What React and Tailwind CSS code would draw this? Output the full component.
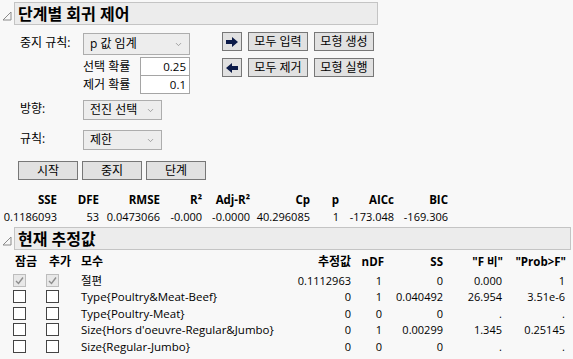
import { ChevronDown } from 'lucide-react'

const font = "font-['Segoe_UI','Open_Sans','Noto_Sans_CJK_KR',sans-serif]"

function Disclosure() {
  return (
    <svg width="10" height="10" viewBox="0 0 10 10" className="mx-[2px] mt-[4px] shrink-0">
      <polygon points="1,9 9,1 9,9" fill="none" stroke="#8a8a8a" strokeWidth="1" />
    </svg>
  )
}

function SectionHeader({ title, width }) {
  return (
    <div className="flex items-center">
      <Disclosure />
      <div className={`${width} h-[23px] border border-[#c4c4c4] bg-[#ececec] flex items-center pl-[3px]`}>
        <span className="text-[16px] font-bold leading-none text-black">{title}</span>
      </div>
    </div>
  )
}

function Dropdown({ value, width, height }) {
  return (
    <div className={`${width} ${height} border border-[#adadad] bg-[#ededed] flex items-center justify-between pl-[6px] pr-[6px]`}>
      <span className="leading-none text-[12px]">{value}</span>
      <ChevronDown className="w-[9px] h-[9px] text-[#8a8a8a]" strokeWidth={2} />
    </div>
  )
}

function Btn({ children, width = 'w-[60px]' }) {
  return (
    <div className={`${width} h-[19px] border border-[#777] bg-[#e1e1e1] flex items-center justify-center leading-none text-[12px]`}>
      {children}
    </div>
  )
}

function ArrowBtn({ dir }) {
  return (
    <div className="w-[20px] h-[19px] border border-[#777] bg-[#e1e1e1] flex items-center justify-center">
      <svg width="14" height="10" viewBox="0 0 14 10">
        {dir === 'right' ? (
          <polygon points="1,3 7,3 7,0 13,5 7,10 7,7 1,7" fill="#0b1a48" />
        ) : (
          <polygon points="13,3 7,3 7,0 1,5 7,10 7,7 13,7" fill="#0b1a48" />
        )}
      </svg>
    </div>
  )
}

function NumBox({ value }) {
  return (
    <div className="w-[50px] h-[19px] border border-[#a5a5a5] bg-white flex items-center justify-end pr-[3px] leading-none text-[11.5px]">
      {value}
    </div>
  )
}

function Check({ checked, disabled }) {
  return (
    <div
      className={`w-[13px] h-[13px] border flex items-center justify-center ${
        disabled ? 'border-[#bdbdbd] bg-[#e8e8e8]' : 'border-[#444] bg-white'
      }`}
    >
      {checked && (
        <svg width="9" height="9" viewBox="0 0 9 9">
          <polyline points="1,5 3.5,7.5 8,1.5" fill="none" stroke="#8d8d8d" strokeWidth="1.4" />
        </svg>
      )}
    </div>
  )
}

const statCols = [
  ['SSE', '0.1186093', 'w-[57px]'],
  ['DFE', '53', 'w-[42px]'],
  ['RMSE', '0.0473066', 'w-[61px]'],
  ['R²', '-0.000', 'w-[42px]'],
  ['Adj-R²', '-0.0000', 'w-[48px]'],
  ['Cp', '40.296085', 'w-[60px]'],
  ['p', '1', 'w-[29px]'],
  ['AICc', '-173.048', 'w-[55px]'],
  ['BIC', '-169.306', 'w-[54px]'],
]

const rows = [
  { term: '절편', est: '0.1112963', ndf: '1', ss: '0', f: '0.000', p: '1', fixed: true },
  { term: 'Type{Poultry&Meat-Beef}', est: '0', ndf: '1', ss: '0.040492', f: '26.954', p: '3.51e-6' },
  { term: 'Type{Poultry-Meat}', est: '0', ndf: '0', ss: '0', f: '.', p: '.' },
  { term: "Size{Hors d'oeuvre-Regular&Jumbo}", est: '0', ndf: '1', ss: '0.00299', f: '1.345', p: '0.25145' },
  { term: 'Size{Regular-Jumbo}', est: '0', ndf: '0', ss: '0', f: '.', p: '.' },
]

export default function App() {
  return (
    <div className={`w-[573px] h-[359px] overflow-hidden bg-[#f8f8f8] text-[11px] text-black whitespace-nowrap ${font}`}>
      <div className="pt-[2px]">
        <SectionHeader title="단계별 회귀 제어" width="w-[364px]" />
      </div>

      {/* stopping rule + probabilities + entry buttons */}
      <div className="flex pl-[20px] pt-[7px] text-[12px]">
        <div className="w-[63px] pt-[5px] leading-none">중지 규칙:</div>
        <div className="flex flex-col pt-[1px]">
          <Dropdown value="p 값 임계" width="w-[107px]" height="h-[22px]" />
          <div className="flex items-center mt-[2px]">
            <span className="w-[57px] leading-none">선택 확률</span>
            <NumBox value="0.25" />
          </div>
          <div className="flex items-center -mt-[1px]">
            <span className="w-[57px] leading-none">제거 확률</span>
            <NumBox value="0.1" />
          </div>
        </div>
        <div className="flex flex-col gap-[7px] ml-[32px]">
          <div className="flex gap-[6px]">
            <ArrowBtn dir="right" />
            <Btn>모두 입력</Btn>
            <Btn>모형 생성</Btn>
          </div>
          <div className="flex gap-[6px]">
            <ArrowBtn dir="left" />
            <Btn>모두 제거</Btn>
            <Btn>모형 실행</Btn>
          </div>
        </div>
      </div>

      <div className="flex pl-[20px] mt-[6px] text-[12px]">
        <div className="w-[63px] pt-[3px] leading-none">방향:</div>
        <Dropdown value="전진 선택" width="w-[79px]" height="h-[20px]" />
      </div>
      <div className="flex pl-[20px] mt-[10px] text-[12px]">
        <div className="w-[63px] pt-[3px] leading-none">규칙:</div>
        <Dropdown value="제한" width="w-[79px]" height="h-[20px]" />
      </div>

      <div className="flex gap-[4px] pl-[18px] mt-[11px]">
        <Btn>시작</Btn>
        <Btn>중지</Btn>
        <Btn>단계</Btn>
      </div>

      {/* fit statistics */}
      <div className="mt-[12px] text-[11.5px]">
        <div className="flex h-[16px] items-center font-bold">
          {statCols.map(([h, , w]) => (
            <div key={h} className={`${w} text-right leading-none`}>{h}</div>
          ))}
        </div>
        <div className="flex h-[16px] items-center text-[11px]">
          {statCols.map(([h, v, w]) => (
            <div key={h} className={`${w} text-right leading-none`}>{v}</div>
          ))}
        </div>
      </div>

      <div className="mt-[3px]">
        <SectionHeader title="현재 추정값" width="w-[557px]" />
      </div>

      {/* current estimates */}
      <div className="mt-[3px]">
        <div className="flex h-[17px] items-center font-bold leading-none text-[11.5px]">
          <div className="w-[49px] pl-[15px] text-[12px]">잠금</div>
          <div className="w-[32px] text-[12px]">추가</div>
          <div className="w-[190px] text-[12px]">모수</div>
          <div className="w-[80px] text-right text-[12px]">추정값</div>
          <div className="w-[33px] text-right">nDF</div>
          <div className="w-[59px] text-right">SS</div>
          <div className="w-[60px] text-right">"F 비"</div>
          <div className="w-[63px] text-right">"Prob&gt;F"</div>
        </div>
        <div className="mt-[2px]">
          {rows.map((r) => (
            <div key={r.term} className="flex h-[16.5px] items-center leading-none">
              <div className="w-[46px] pl-[13px]">
                <Check checked={r.fixed} disabled={r.fixed} />
              </div>
              <div className="w-[35px]">
                <Check checked={r.fixed} disabled={r.fixed} />
              </div>
              <div className="w-[190px] text-[11.5px]">{r.term}</div>
              <div className="w-[80px] text-right">{r.est}</div>
              <div className="w-[31px] text-right">{r.ndf}</div>
              <div className="w-[61px] text-right">{r.ss}</div>
              <div className="w-[59px] text-right">{r.f}</div>
              <div className="w-[63px] text-right">{r.p}</div>
            </div>
          ))}
        </div>
      </div>
    </div>
  )
}
